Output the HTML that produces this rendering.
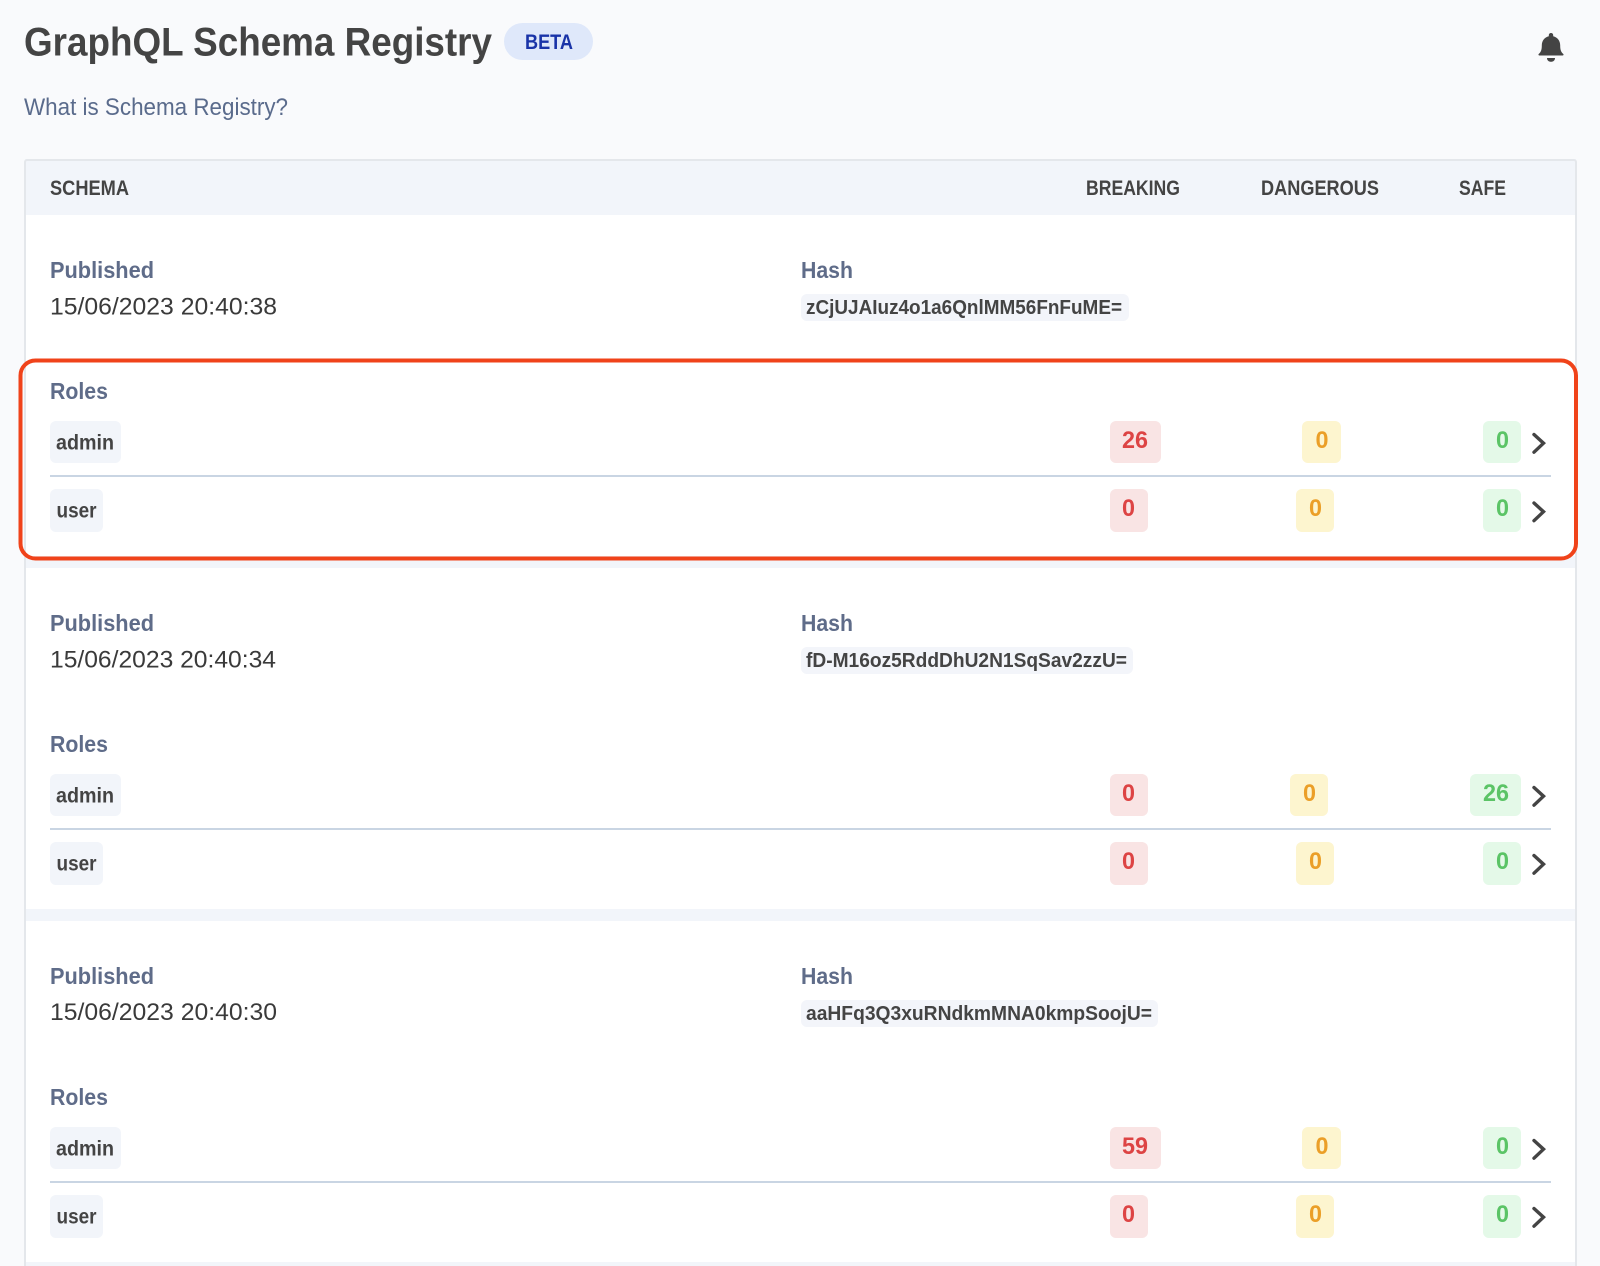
<!DOCTYPE html>
<html lang="en"><head><meta charset="utf-8"><title>GraphQL Schema Registry</title>
<style>
html,body{margin:0;padding:0;background:#f9fafc}
svg{display:block}
text{font-family:"Liberation Sans",sans-serif}
.b{font-weight:700}
.lab{font-weight:700;font-size:23px;fill:#5f6c89}
.hd{font-weight:700;font-size:21px;fill:#444}
.date{font-size:24px;fill:#3a3a3a}
.hash{font-weight:700;font-size:20px;fill:#444}
.role{font-weight:700;font-size:21px;fill:#444}
.num{font-weight:700;font-size:24px}
.r{fill:#dd4444}.y{fill:#eb9f28}.g{fill:#5bc466}
.chev{fill:none;stroke:#444;stroke-width:3.4;stroke-linecap:round;stroke-linejoin:miter}
</style></head><body>
<svg xmlns="http://www.w3.org/2000/svg" width="1600" height="1266" viewBox="0 0 1600 1266">
<rect width="1600" height="1266" fill="#f9fafc"/>
<text class="b" x="24" y="55.500" font-size="40" fill="#444" textLength="468" lengthAdjust="spacingAndGlyphs">GraphQL Schema Registry</text>
<rect x="504" y="23" width="89" height="37" rx="18.500" fill="#dfe8fa"/>
<text class="b" x="525" y="49" font-size="21" fill="#1a34a8" textLength="48" lengthAdjust="spacingAndGlyphs">BETA</text>
<text x="24" y="115" font-size="24" fill="#5a6b8c" textLength="264" lengthAdjust="spacingAndGlyphs">What is Schema Registry?</text>
<path fill="#444" d="M1551 33c1.300 0 2.200 .9 2.200 2.200v1.100c4.300 1 7 4.600 7 9.200 0 3.800 .6 6.400 3 8.400 .6 .5 .5 1.600-.5 1.600h-23.400c-1 0-1.100-1.100-.5-1.600 2.400-2 3-4.600 3-8.400 0-4.600 2.700-8.200 7-9.200v-1.100c0-1.300 .9-2.200 2.200-2.200z"/>
<path fill="#444" d="M1547 58h8c0 2.400-1.700 3.800-4 3.800s-4-1.400-4-3.800z"/>

<rect x="25" y="159" width="1551" height="1107" fill="#f2f5fa"/>
<path d="M25 1266V162a2 2 0 0 1 2-2H1574a2 2 0 0 1 2 2V1266" fill="none" stroke="#e4e7eb" stroke-width="2"/>
<text class="hd" x="50" y="195" textLength="79" lengthAdjust="spacingAndGlyphs">SCHEMA</text>
<text class="hd" x="1086" y="195" textLength="94" lengthAdjust="spacingAndGlyphs">BREAKING</text>
<text class="hd" x="1261" y="195" textLength="118" lengthAdjust="spacingAndGlyphs">DANGEROUS</text>
<text class="hd" x="1459" y="195" textLength="47" lengthAdjust="spacingAndGlyphs">SAFE</text>

<!-- Section 1 -->
<g>
<rect x="26" y="215" width="1549" height="341" fill="#fff"/>
<text class="lab" x="50" y="278" textLength="104" lengthAdjust="spacingAndGlyphs">Published</text>
<text class="date" x="50" y="314.500" textLength="227" lengthAdjust="spacingAndGlyphs">15/06/2023 20:40:38</text>
<text class="lab" x="801" y="278" textLength="52" lengthAdjust="spacingAndGlyphs">Hash</text>
<rect x="801" y="294" width="328" height="27" rx="6" fill="#f3f5fa"/>
<text class="hash" x="806" y="314" textLength="316" lengthAdjust="spacingAndGlyphs">zCjUJAIuz4o1a6QnlMM56FnFuME=</text>
<text class="lab" x="50" y="399" textLength="58" lengthAdjust="spacingAndGlyphs">Roles</text>
<rect x="50" y="421" width="71" height="42" rx="6" fill="#f2f5fa"/>
<text class="role" x="56" y="449.500" textLength="58" lengthAdjust="spacingAndGlyphs">admin</text>
<rect x="1110" y="421" width="51" height="42" rx="6" fill="#f9e4e4"/>
<text class="num r" x="1122" y="448" textLength="26" lengthAdjust="spacingAndGlyphs">26</text>
<rect x="1302" y="421" width="39" height="42" rx="6" fill="#fdf5cf"/>
<text class="num y" x="1315.500" y="448" textLength="13" lengthAdjust="spacingAndGlyphs">0</text>
<rect x="1483" y="421" width="38" height="42" rx="6" fill="#e4f9e8"/>
<text class="num g" x="1496" y="448" textLength="13" lengthAdjust="spacingAndGlyphs">0</text>
<path class="chev" d="M1534 434.500l9.500 8.700-9.500 9"/>
<rect x="50" y="475" width="1501" height="2" fill="#c9d5e3"/>
<rect x="50" y="489" width="53" height="43" rx="6" fill="#f2f5fa"/>
<text class="role" x="56.500" y="517.500" textLength="40" lengthAdjust="spacingAndGlyphs">user</text>
<rect x="1110" y="489" width="38" height="43" rx="6" fill="#f9e4e4"/>
<text class="num r" x="1122" y="516" textLength="13" lengthAdjust="spacingAndGlyphs">0</text>
<rect x="1296" y="489" width="38" height="43" rx="6" fill="#fdf5cf"/>
<text class="num y" x="1309" y="516" textLength="13" lengthAdjust="spacingAndGlyphs">0</text>
<rect x="1483" y="489" width="38" height="43" rx="6" fill="#e4f9e8"/>
<text class="num g" x="1496" y="516" textLength="13" lengthAdjust="spacingAndGlyphs">0</text>
<path class="chev" d="M1534 503l9.500 8.700-9.500 9"/>
</g>

<!-- Section 2 -->
<g transform="translate(0,353)">
<rect x="26" y="215" width="1549" height="341" fill="#fff"/>
<text class="lab" x="50" y="278" textLength="104" lengthAdjust="spacingAndGlyphs">Published</text>
<text class="date" x="50" y="314.500" textLength="226" lengthAdjust="spacingAndGlyphs">15/06/2023 20:40:34</text>
<text class="lab" x="801" y="278" textLength="52" lengthAdjust="spacingAndGlyphs">Hash</text>
<rect x="801" y="294" width="332" height="27" rx="6" fill="#f3f5fa"/>
<text class="hash" x="806" y="314" textLength="321" lengthAdjust="spacingAndGlyphs">fD-M16oz5RddDhU2N1SqSav2zzU=</text>
<text class="lab" x="50" y="399" textLength="58" lengthAdjust="spacingAndGlyphs">Roles</text>
<rect x="50" y="421" width="71" height="42" rx="6" fill="#f2f5fa"/>
<text class="role" x="56" y="449.500" textLength="58" lengthAdjust="spacingAndGlyphs">admin</text>
<rect x="1110" y="421" width="38" height="42" rx="6" fill="#f9e4e4"/>
<text class="num r" x="1122" y="448" textLength="13" lengthAdjust="spacingAndGlyphs">0</text>
<rect x="1290" y="421" width="38" height="42" rx="6" fill="#fdf5cf"/>
<text class="num y" x="1303" y="448" textLength="13" lengthAdjust="spacingAndGlyphs">0</text>
<rect x="1470" y="421" width="51" height="42" rx="6" fill="#e4f9e8"/>
<text class="num g" x="1483" y="448" textLength="26" lengthAdjust="spacingAndGlyphs">26</text>
<path class="chev" d="M1534 434.500l9.500 8.700-9.500 9"/>
<rect x="50" y="475" width="1501" height="2" fill="#c9d5e3"/>
<rect x="50" y="489" width="53" height="43" rx="6" fill="#f2f5fa"/>
<text class="role" x="56.500" y="517.500" textLength="40" lengthAdjust="spacingAndGlyphs">user</text>
<rect x="1110" y="489" width="38" height="43" rx="6" fill="#f9e4e4"/>
<text class="num r" x="1122" y="516" textLength="13" lengthAdjust="spacingAndGlyphs">0</text>
<rect x="1296" y="489" width="38" height="43" rx="6" fill="#fdf5cf"/>
<text class="num y" x="1309" y="516" textLength="13" lengthAdjust="spacingAndGlyphs">0</text>
<rect x="1483" y="489" width="38" height="43" rx="6" fill="#e4f9e8"/>
<text class="num g" x="1496" y="516" textLength="13" lengthAdjust="spacingAndGlyphs">0</text>
<path class="chev" d="M1534 502.500l9.500 8.700-9.500 9"/>
</g>

<!-- Section 3 -->
<g transform="translate(0,706)">
<rect x="26" y="215" width="1549" height="341" fill="#fff"/>
<text class="lab" x="50" y="278" textLength="104" lengthAdjust="spacingAndGlyphs">Published</text>
<text class="date" x="50" y="314" textLength="227" lengthAdjust="spacingAndGlyphs">15/06/2023 20:40:30</text>
<text class="lab" x="801" y="278" textLength="52" lengthAdjust="spacingAndGlyphs">Hash</text>
<rect x="801" y="294" width="357" height="27" rx="6" fill="#f3f5fa"/>
<text class="hash" x="806" y="314" textLength="346" lengthAdjust="spacingAndGlyphs">aaHFq3Q3xuRNdkmMNA0kmpSoojU=</text>
<text class="lab" x="50" y="399" textLength="58" lengthAdjust="spacingAndGlyphs">Roles</text>
<rect x="50" y="421" width="71" height="42" rx="6" fill="#f2f5fa"/>
<text class="role" x="56" y="449.500" textLength="58" lengthAdjust="spacingAndGlyphs">admin</text>
<rect x="1110" y="421" width="51" height="42" rx="6" fill="#f9e4e4"/>
<text class="num r" x="1122" y="448" textLength="26" lengthAdjust="spacingAndGlyphs">59</text>
<rect x="1302" y="421" width="39" height="42" rx="6" fill="#fdf5cf"/>
<text class="num y" x="1315.500" y="448" textLength="13" lengthAdjust="spacingAndGlyphs">0</text>
<rect x="1483" y="421" width="38" height="42" rx="6" fill="#e4f9e8"/>
<text class="num g" x="1496" y="448" textLength="13" lengthAdjust="spacingAndGlyphs">0</text>
<path class="chev" d="M1534 434.500l9.500 8.700-9.500 9"/>
<rect x="50" y="475" width="1501" height="2" fill="#c9d5e3"/>
<rect x="50" y="489" width="53" height="43" rx="6" fill="#f2f5fa"/>
<text class="role" x="56.500" y="517.500" textLength="40" lengthAdjust="spacingAndGlyphs">user</text>
<rect x="1110" y="489" width="38" height="43" rx="6" fill="#f9e4e4"/>
<text class="num r" x="1122" y="516" textLength="13" lengthAdjust="spacingAndGlyphs">0</text>
<rect x="1296" y="489" width="38" height="43" rx="6" fill="#fdf5cf"/>
<text class="num y" x="1309" y="516" textLength="13" lengthAdjust="spacingAndGlyphs">0</text>
<rect x="1483" y="489" width="38" height="43" rx="6" fill="#e4f9e8"/>
<text class="num g" x="1496" y="516" textLength="13" lengthAdjust="spacingAndGlyphs">0</text>
<path class="chev" d="M1534 502.500l9.500 8.700-9.500 9"/>
</g>

<rect x="20.500" y="360.500" width="1555.500" height="198" rx="15" fill="none" stroke="#f0431a" stroke-width="4"/>
</svg>
</body></html>
